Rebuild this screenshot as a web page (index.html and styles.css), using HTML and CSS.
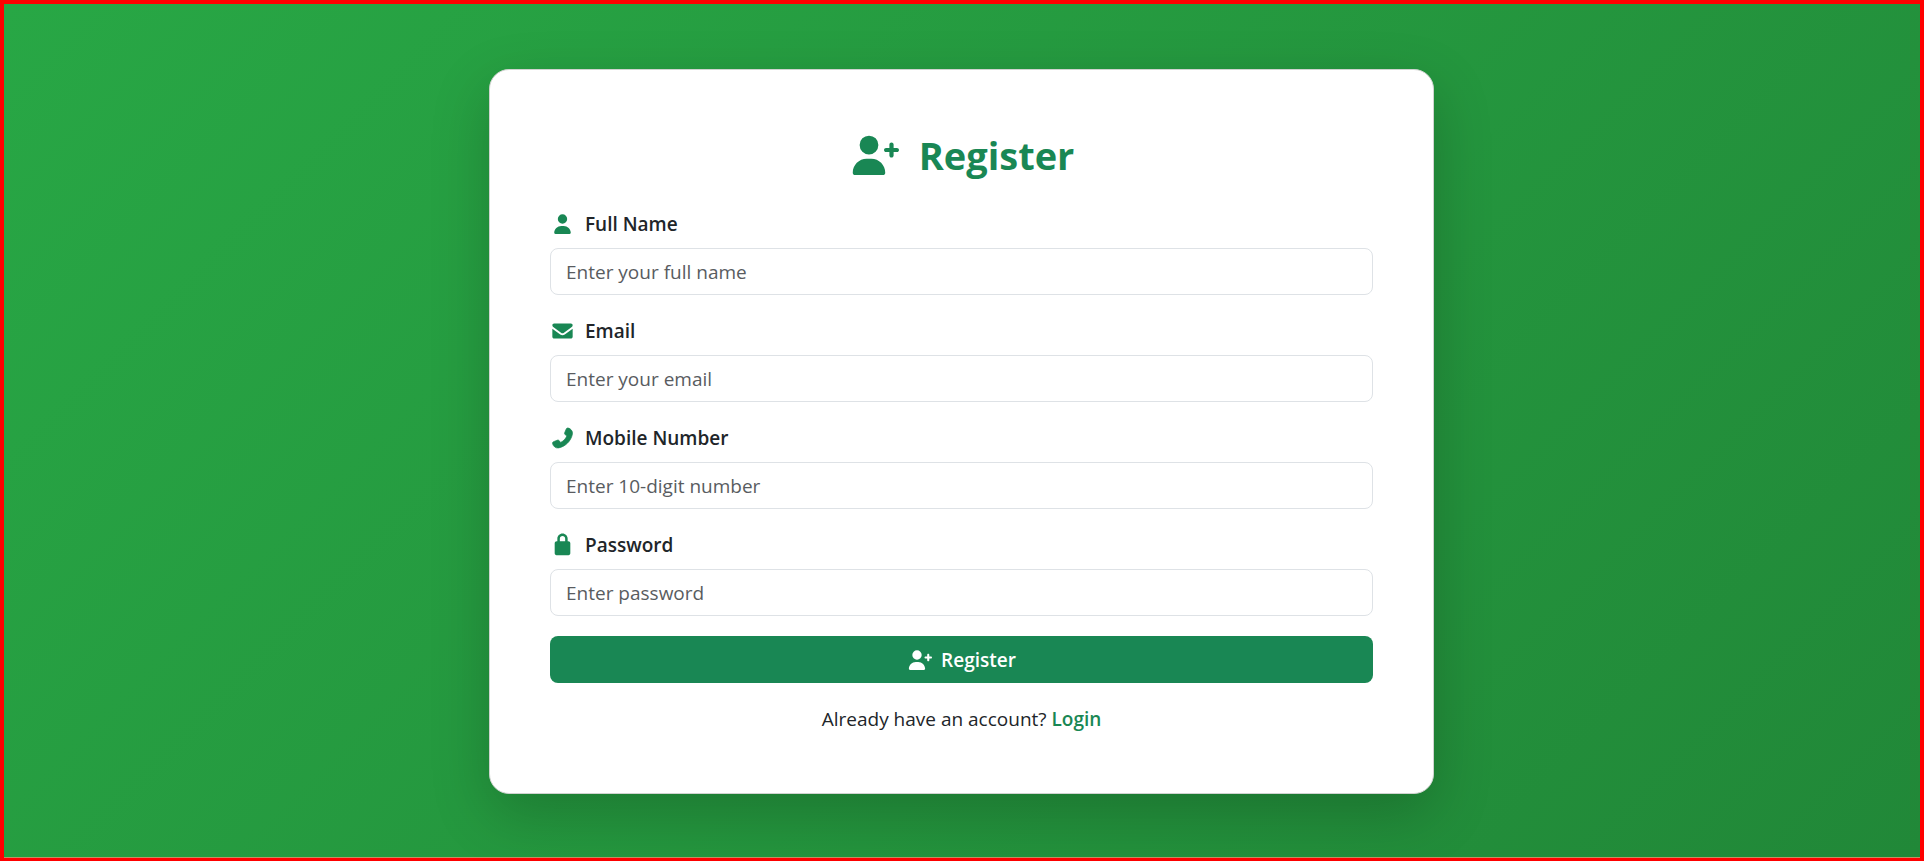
FILE: index.html
```html
<!DOCTYPE html>
<html lang="en">
<head>
<meta charset="utf-8">
<meta name="viewport" content="width=device-width, initial-scale=1">
<title>Register</title>
<link rel="stylesheet" href="styles.css">
</head>
<body>
<svg class="sprite" aria-hidden="true">
  <symbol id="user" viewBox="0 0 448 512"><path d="M224 248a120 120 0 1 0 0-240 120 120 0 1 0 0 240zm-29.700 56C95.800 304 12 383.800 12 482.300 12 498.700 25.300 512 41.700 512h364.600c16.400 0 29.700-13.300 29.700-29.700C436 383.800 352.200 304 253.700 304z"/></symbol>
  <symbol id="user-plus" viewBox="0 0 640 512"><path d="M256 248a120 120 0 1 0 0-240 120 120 0 1 0 0 240zm-29.700 56C127.800 304 48 383.800 48 482.300 48 498.700 61.300 512 77.700 512h356.600c16.400 0 29.700-13.300 29.700-29.700C464 383.800 384.200 304 285.700 304zM544 96c-15 0-27 12-27 27v42h-42c-15 0-27 12-27 27s12 27 27 27h42v42c0 15 12 27 27 27s27-12 27-27v-42h42c15 0 27-12 27-27s-12-27-27-27h-42v-42c0-15-12-27-27-27z"/></symbol>
  <symbol id="envelope" viewBox="0 0 512 512"><path d="M40 64C16 64 -4 84 -4 108c0 17 9 33 23.200 42.400l208 156c17.100 12.800 40.500 12.800 57.600 0l208-156C507 141 516 125 516 108c0-24-20-44-44-44zM-4 196v204c0 26.500 21.500 48 48 48h424c26.500 0 48-21.500 48-48V196L313.600 344.800c-34.100 25.600-81.100 25.600-115.200 0z"/></symbol>
  <symbol id="phone" viewBox="0 0 512 512"><path stroke="currentColor" stroke-width="18" stroke-linejoin="round" transform="matrix(-1 0 0 1 512 0)" d="M160.200 25C152.300 6.100 131.700-3.900 112.100 1.400l-5.500 1.500c-64.600 17.600-119.800 80.200-103.700 156.400 37.100 175 174.800 312.700 349.800 349.800 76.300 16.200 138.800-39.100 156.400-103.700l1.500-5.500c5.400-19.700-4.700-40.300-23.500-48.100l-97.300-40.500c-16.500-6.900-35.600-2.100-47 11.800l-38.600 47.200C233.900 335.400 177.300 277 144.800 205.300L189 169.300c13.900-11.300 18.600-30.400 11.800-47z"/></symbol>
  <symbol id="lock" viewBox="0 0 384 512"><path d="M124 96v64h136V96c0-37.500-30.500-68-68-68s-68 30.500-68 68zm-64 64V96C60 23 119-36 192-36S324 23 324 96v64h14c32 0 54 22 54 54v254c0 28-18 48-46 48H38c-28 0-46-20-46-48V214c0-32 22-54 54-54z"/></symbol>
</svg>
<main class="page">
  <section class="card">
    <h1 class="title"><svg class="icon-title" aria-hidden="true"><use href="#user-plus"/></svg>Register</h1>
    <form class="form">
      <div class="field">
        <label class="label" for="name"><svg class="icon" aria-hidden="true"><use href="#user"/></svg>Full Name</label>
        <input class="input" id="name" type="text" placeholder="Enter your full name">
      </div>
      <div class="field">
        <label class="label" for="email"><svg class="icon" aria-hidden="true"><use href="#envelope"/></svg>Email</label>
        <input class="input" id="email" type="email" placeholder="Enter your email">
      </div>
      <div class="field">
        <label class="label" for="mobile"><svg class="icon" aria-hidden="true"><use href="#phone"/></svg>Mobile Number</label>
        <input class="input" id="mobile" type="tel" placeholder="Enter 10-digit number">
      </div>
      <div class="field">
        <label class="label" for="password"><svg class="icon" aria-hidden="true"><use href="#lock"/></svg>Password</label>
        <input class="input" id="password" type="password" placeholder="Enter password">
      </div>
      <button class="submit" type="submit"><svg class="icon-submit" aria-hidden="true"><use href="#user-plus"/></svg>Register</button>
    </form>
    <p class="login">Already have an account? <a class="link" href="#login">Login</a></p>
  </section>
</main>
</body>
</html>
```
FILE: styles.css
```css
*, *::before, *::after { box-sizing: border-box; }
body {
  margin: 0;
  font-family: "Segoe UI", "Open Sans", "Noto Sans", sans-serif;
  font-size: 19px;
  line-height: 32px;
  color: #212529;
}
.sprite { position: absolute; width: 0; height: 0; }
svg, symbol { overflow: visible; }
svg { fill: currentColor; flex: none; }
.page {
  min-height: 100vh;
  display: flex;
  align-items: center;
  justify-content: center;
  padding: 24px 25px 24px 24px;
  border: 4px solid #ff0000;
  border-bottom-width: 3px;
  background: linear-gradient(135deg, #28a745, #218838);
  box-shadow: inset 0 -1px #c48f62;
}
.card {
  width: 100%;
  max-width: 945px;
  padding: 60px 60px 58px;
  background: #fff;
  border: 1px solid #d0d3d0;
  border-radius: 20px;
  box-shadow: 0 20px 60px rgba(0, 0, 0, 0.2);
}
.title {
  display: flex;
  align-items: center;
  justify-content: center;
  gap: 20px;
  margin: 0 0 28px;
  font-size: 38px;
  line-height: 50px;
  font-weight: 700;
  color: #198754;
}
.icon-title { width: 50px; height: 40px; }
.form { display: flex; flex-direction: column; gap: 20px; }
.field { display: flex; flex-direction: column; gap: 8px; }
.label {
  display: flex;
  align-items: center;
  gap: 10px;
  font-weight: 600;
}
.icon { width: 25px; height: 20px; color: #198754; }
.input {
  width: 100%;
  height: 47px;
  padding: 2px 15px 0;
  font: inherit;
  color: #212529;
  background: #fff;
  border: 1px solid #dee2e6;
  border-radius: 8px;
}
.input::placeholder { color: #595c5f; opacity: 1; }
.submit {
  display: flex;
  align-items: center;
  justify-content: center;
  gap: 9px;
  height: 47px;
  padding: 2px 15px 0;
  font: inherit;
  font-weight: 600;
  color: #fff;
  background: #198754;
  border: 0;
  border-radius: 8px;
}
.icon-submit { width: 25px; height: 20px; }
.login { margin: 20px 0 0; text-align: center; }
.link { color: #198754; font-weight: 600; text-decoration: none; }
```
